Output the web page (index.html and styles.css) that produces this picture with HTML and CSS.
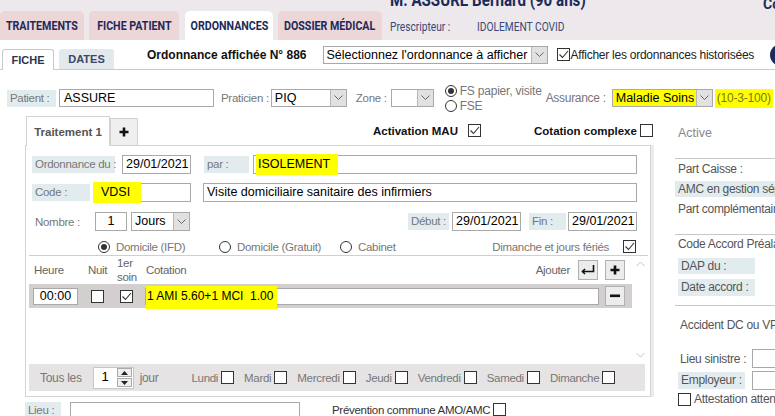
FILE: index.html
```html
<!DOCTYPE html>
<html lang="fr">
<head>
    <meta charset="UTF-8">
    <title>Ordonnances</title>
    <link rel="stylesheet" href="styles.css">
</head>
<body>
    <div class="top">
        <div class="tabs">
            <div class="tab t1"><span>TRAITEMENTS</span></div>
            <div class="tab t2"><span>FICHE PATIENT</span></div>
            <div class="tab t3 on"><span>ORDONNANCES</span></div>
            <div class="tab t4"><span>DOSSIER MÉDICAL</span></div>
        </div>
        <div class="who">
            <div class="who-name"><span>M. ASSURE Bernard (90 ans)</span></div>
            <div class="who-presc"><span class="who-k">Prescripteur :</span><span class="who-v">IDOLEMENT COVID</span></div>
        </div>
        <div class="who-co">Co</div>
    </div>

    <div class="subbar">
        <div class="subtab on">FICHE</div>
        <div class="subtab off">DATES</div>
        <div class="ord-title">Ordonnance affichée N° 886</div>
        <div class="sel sel-ord"><span class="sel-txt">Sélectionnez l'ordonnance à afficher</span><span class="sel-btn"><svg width="9" height="6" viewBox="0 0 9 6"><polyline points="0.5,0.5 4.5,4.5 8.5,0.5" fill="none" stroke="#666" stroke-width="1"/></svg></span></div>
        <span class="cb on hist-cb"><svg width="11" height="11" viewBox="0 0 11 11"><polyline points="1.5,5.5 4.5,8.5 10,2" fill="none" stroke="#333" stroke-width="1.1"/></svg></span>
        <span class="hist">Afficher les ordonnances historisées</span>
        <span class="info">i</span>
    </div>

    <div class="prow">
        <span class="lbl l-pat">Patient :</span>
        <div class="fld f-pat">ASSURE</div>
        <span class="txt t-prat">Praticien :</span>
        <div class="sel s-prat"><span class="sel-txt">PIQ</span><span class="sel-btn"><svg width="9" height="6" viewBox="0 0 9 6"><polyline points="0.5,0.5 4.5,4.5 8.5,0.5" fill="none" stroke="#666" stroke-width="1"/></svg></span></div>
        <span class="txt t-zone">Zone :</span>
        <div class="sel s-zone"><span class="sel-txt"></span><span class="sel-btn"><svg width="9" height="6" viewBox="0 0 9 6"><polyline points="0.5,0.5 4.5,4.5 8.5,0.5" fill="none" stroke="#666" stroke-width="1"/></svg></span></div>
        <div class="rads">
            <div class="rad-line"><span class="rad on"></span><span>FS papier, visite</span></div>
            <div class="rad-line"><span class="rad"></span><span>FSE</span></div>
        </div>
        <span class="txt t-ass">Assurance :</span>
        <div class="sel s-ass"><span class="sel-txt"><span class="hl">Maladie Soins</span></span><span class="sel-btn"><svg width="9" height="6" viewBox="0 0 9 6"><polyline points="0.5,0.5 4.5,4.5 8.5,0.5" fill="none" stroke="#666" stroke-width="1"/></svg></span></div>
        <span class="taux">(10-3-100)</span>
    </div>

    <div class="main">
        <div class="left">
            <div class="treat-head">
                <div class="ttab">Traitement 1</div>
                <div class="ptab"><svg width="10" height="10" viewBox="0 0 10 10"><path d="M5 0.5V9.5M0.5 5H9.5" stroke="#111" stroke-width="2.6"/></svg></div>
                <span class="mau">Activation MAU</span>
                <span class="cb on mau-cb"><svg width="11" height="11" viewBox="0 0 11 11"><polyline points="1.5,5.5 4.5,8.5 10,2" fill="none" stroke="#333" stroke-width="1.1"/></svg></span>
                <span class="mau cplx">Cotation complexe</span>
                <span class="cb cplx-cb"></span>
            </div>

            <div class="panel">
                <div class="frow">
                    <span class="lbl l-ord">Ordonnance du :</span>
                    <div class="fld f-date f-ord">29/01/2021</div>
                    <span class="lbl l-par">par :</span>
                    <div class="fld f-par"><span class="hl hl-iso">ISOLEMENT</span></div>
                </div>
                <div class="frow fr-code">
                    <span class="lbl l-code">Code :</span>
                    <div class="fld f-code"><span class="hl hl-code">VDSI</span></div>
                    <div class="fld f-lib">Visite domiciliaire sanitaire des infirmiers</div>
                </div>
                <div class="frow fr-nb">
                    <span class="txt t-nb">Nombre :</span>
                    <div class="fld f-nb">1</div>
                    <div class="sel s-jours"><span class="sel-txt">Jours</span><span class="sel-btn"><svg width="9" height="6" viewBox="0 0 9 6"><polyline points="0.5,0.5 4.5,4.5 8.5,0.5" fill="none" stroke="#666" stroke-width="1"/></svg></span></div>
                    <span class="lbl l-deb">Début :</span>
                    <div class="fld f-date f-deb">29/01/2021</div>
                    <span class="lbl l-fin">Fin :</span>
                    <div class="fld f-date f-fin">29/01/2021</div>
                </div>
                <div class="frow fr-lieu">
                    <div class="ritem"><span class="rad on"></span><span>Domicile (IFD)</span></div>
                    <div class="ritem"><span class="rad"></span><span>Domicile (Gratuit)</span></div>
                    <div class="ritem"><span class="rad"></span><span>Cabinet</span></div>
                    <span class="t-dim">Dimanche et jours fériés</span>
                    <span class="cb on dim-cb"><svg width="11" height="11" viewBox="0 0 11 11"><polyline points="1.5,5.5 4.5,8.5 10,2" fill="none" stroke="#333" stroke-width="1.1"/></svg></span>
                </div>

                <div class="grid">
                    <div class="grid-main">
                        <div class="ghead">
                            <span class="c-heure">Heure</span>
                            <span class="c-nuit">Nuit</span>
                            <span class="c-soin">1er<br>soin</span>
                            <span class="c-cot">Cotation</span>
                            <span class="ajout">Ajouter</span>
                            <span class="gbtn b-ret"><svg width="16" height="12" viewBox="0 0 16 12"><path d="M13.5 1V7.5H2.5" fill="none" stroke="#111" stroke-width="1.6"/><path d="M5 5L2.5 7.5L5 10" fill="none" stroke="#111" stroke-width="1.6"/></svg></span>
                            <span class="gbtn b-add"><svg width="10" height="10" viewBox="0 0 10 10"><path d="M5 0.5V9.5M0.5 5H9.5" stroke="#111" stroke-width="2.6"/></svg></span>
                        </div>
                        <div class="gdata">
                            <span class="c-heure"><span class="fld f-h">00:00</span></span>
                            <span class="c-nuit"><span class="cb"></span></span>
                            <span class="c-soin"><span class="cb on"><svg width="11" height="11" viewBox="0 0 11 11"><polyline points="1.5,5.5 4.5,8.5 10,2" fill="none" stroke="#333" stroke-width="1.1"/></svg></span></span>
                            <div class="fld f-cot"><span class="hl hl-cot">1 AMI 5.60+1 MCI&nbsp; 1.00</span></div>
                            <span class="gbtn b-del"><svg width="10" height="4" viewBox="0 0 10 4"><rect x="0" y="0.5" width="10" height="2.6" fill="#111"/></svg></span>
                        </div>
                    </div>
                    <div class="grid-scroll">
                        <svg width="9" height="6" viewBox="0 0 9 6"><polyline points="0.5,5 4.5,1 8.5,5" fill="none" stroke="#c4c4c4" stroke-width="1"/></svg>
                        <svg width="9" height="6" viewBox="0 0 9 6"><polyline points="0.5,1 4.5,5 8.5,1" fill="none" stroke="#c4c4c4" stroke-width="1"/></svg>
                    </div>
                </div>

                <div class="repeat">
                    <span class="txt t-tous">Tous les</span>
                    <div class="spin">
                        <span class="spin-val">1</span>
                        <span class="spin-btns">
                            <span class="spin-b"><svg width="7" height="4" viewBox="0 0 7 4"><polygon points="0,4 3.5,0 7,4" fill="#222"/></svg></span>
                            <span class="spin-b"><svg width="7" height="4" viewBox="0 0 7 4"><polygon points="0,0 3.5,4 7,0" fill="#222"/></svg></span>
                        </span>
                    </div>
                    <span class="txt t-jour">jour</span>
                    <span class="txt day d-first">Lundi</span><span class="cb"></span>
                    <span class="txt day">Mardi</span><span class="cb"></span>
                    <span class="txt day">Mercredi</span><span class="cb"></span>
                    <span class="txt day">Jeudi</span><span class="cb"></span>
                    <span class="txt day">Vendredi</span><span class="cb"></span>
                    <span class="txt day">Samedi</span><span class="cb"></span>
                    <span class="txt day">Dimanche</span><span class="cb"></span>
                </div>
            </div>

            <div class="lrow">
                <span class="lbl l-lieu">Lieu :</span>
                <div class="fld f-lieu"></div>
                <span class="prev">Prévention commune AMO/AMC</span>
                <span class="cb prev-cb"></span>
            </div>
        </div>

        <div class="right">
            <div class="r-active">Active</div>
            <div class="r-hr h1"></div>
            <div class="r-txt r-caisse">Part Caisse :</div>
            <div class="lbl r-amc">AMC en gestion séparée</div>
            <div class="r-txt r-comp">Part complémentaire :</div>
            <div class="r-hr h2"></div>
            <div class="r-txt r-accord">Code Accord Préalable</div>
            <div class="lbl r-dap">DAP du :</div>
            <div class="lbl r-acc">Date accord :</div>
            <div class="r-hr h3"></div>
            <div class="r-txt r-acdc">Accident DC ou VP</div>
            <div class="r-line r-sin"><span class="r-k">Lieu sinistre :</span><div class="fld r-in"></div></div>
            <div class="r-line r-emp"><span class="lbl r-k2">Employeur :</span><div class="fld r-in"></div></div>
            <div class="r-line r-att"><span class="cb"></span><span class="r-att-t">Attestation attente</span></div>
        </div>
    </div>
</body>
</html>
```

FILE: styles.css
```css
* { box-sizing: border-box; }
html, body { margin: 0; overflow: hidden; }
body { width: 775px; height: 416px; font-family: "Liberation Sans", Arial, sans-serif; font-size: 11.5px; color: #333; background: #fff; }

/* header */
.top { height: 40px; background: #ece8eb; display: flex; white-space: nowrap; overflow: hidden; }
.tabs { display: flex; align-items: flex-end; flex-shrink: 0; }
.tab { height: 29px; margin-right: 5px; background: #edd6d7; border-radius: 5px 5px 0 0; display: flex; align-items: center; justify-content: center; font-family: Roboto, sans-serif; font-weight: 700; font-size: 13px; color: #1c2a5a; }
.tab span { display: inline-block; transform: scaleX(.82); }
.tab.on { background: #fff; }
.t1 { width: 84px; }
.t2 { width: 90px; margin-right: 6px; }
.t3 { width: 88px; }
.t4 { width: 104px; margin-right: 0; }
.who { margin-left: 8px; width: 373px; flex-shrink: 0; }
.who-name { margin-top: -9px; height: 17px; line-height: 17px; font-family: Roboto, sans-serif; font-weight: 700; font-size: 18px; color: #1c2a5a; }
.who-name span { display: inline-block; transform: scaleX(.84); transform-origin: left center; }
.who-presc { margin-top: 12px; line-height: 14px; font-family: Roboto, sans-serif; font-size: 12px; color: #3a4877; }
.who-k, .who-v { display: inline-block; transform: scaleX(.85); transform-origin: left center; }
.who-k { width: 87px; }
.who-co { margin-top: -4px; font-family: Roboto, sans-serif; font-weight: 700; font-size: 14px; color: #1c2a5a; }

/* sub bar */
.subbar { height: 30px; border-bottom: 1px solid #c9c9c9; display: flex; align-items: center; white-space: nowrap; }
.subtab { align-self: flex-end; display: flex; align-items: center; justify-content: center; font-weight: 700; font-size: 11px; border-radius: 3px 3px 0 0; flex-shrink: 0; }
.subtab.on { margin-left: 2px; width: 52px; height: 21px; margin-bottom: -1px; background: #fff; border: 1px solid #c9c9c9; border-bottom: none; color: #2a3550; }
.subtab.off { margin-left: 5px; width: 55px; height: 20px; background: #e2e9ec; color: #3a4868; }
.ord-title { margin-left: 33px; font-weight: 700; font-size: 12px; color: #111; flex-shrink: 0; }
.sel-ord { margin-left: 16px; width: 225px; }
.hist-cb { margin-left: 9px; }
.hist { margin-left: 1px; font-size: 12px; color: #222; letter-spacing: -0.25px; flex-shrink: 0; }
.info { margin-left: 16px; width: 22px; height: 22px; flex-shrink: 0; border-radius: 50%; background: #1e2a5e; color: #fff; font-family: "Liberation Serif", serif; font-style: italic; font-weight: 700; font-size: 16px; display: flex; align-items: center; justify-content: center; }

/* shared widgets */
.txt { color: #777; letter-spacing: -0.3px; flex-shrink: 0; }
.lbl { height: 17px; line-height: 17px; background: #e2ecef; color: #777; padding-left: 3px; white-space: nowrap; letter-spacing: -0.3px; flex-shrink: 0; }
.fld { height: 19px; border: 1px solid #a9a9a9; background: #fff; font-size: 12.5px; color: #000; line-height: 17px; padding: 0 4px; white-space: nowrap; flex-shrink: 0; }
.sel { display: flex; height: 18px; border: 1px solid #a9a9a9; background: #fff; font-size: 12.5px; color: #000; flex-shrink: 0; }
.sel-txt { flex: 1; padding-left: 3px; line-height: 16px; overflow: hidden; white-space: nowrap; }
.sel-btn { width: 16px; flex-shrink: 0; background: #e1e1e1; border-left: 1px solid #b8b8b8; display: flex; align-items: center; justify-content: center; }
.cb { width: 13px; height: 13px; border: 1px solid #333; background: #fff; display: inline-flex; align-items: center; justify-content: center; flex-shrink: 0; }
.rad { width: 12px; height: 12px; border: 1px solid #333; border-radius: 50%; background: #fff; display: inline-flex; align-items: center; justify-content: center; flex-shrink: 0; }
.rad.on::after { content: ""; width: 6px; height: 6px; border-radius: 50%; background: #333; }
.hl { background: #ffff00; }

/* patient row */
.prow { margin-top: 14px; height: 28px; display: flex; align-items: center; white-space: nowrap; }
.l-pat { margin-left: 7px; width: 49px; }
.f-pat { margin-left: 3px; width: 155px; height: 18px; line-height: 16px; }
.t-prat { margin-left: 7px; }
.s-prat { margin-left: 2px; width: 76px; }
.t-zone { margin-left: 9px; }
.s-zone { margin-left: 4px; width: 43px; }
.rads { margin-left: 11px; width: 101px; flex-shrink: 0; color: #777; font-size: 12px; letter-spacing: -0.2px; }
.rad-line { display: flex; align-items: center; height: 14px; }
.rad-line + .rad-line { margin-top: 1px; }
.rad-line .rad { margin-right: 3px; }
.t-ass { font-size: 12px; }
.s-ass { margin-left: 6px; width: 101px; }
.s-ass .sel-txt { padding-left: 0; }
.s-ass .hl { padding: 2px 3px 3px 3px; }
.taux { margin-left: 2px; padding: 2px 2px 3px; background: #ffff00; color: #7a7a10; font-size: 12px; letter-spacing: -0.2px; }

/* main area */
.main { display: flex; margin-top: 4px; }
.left { margin-left: 25px; width: 626px; flex-shrink: 0; }
.right { margin-left: 24px; width: 100px; flex-shrink: 0; white-space: nowrap; color: #555; font-size: 12px; letter-spacing: -0.3px; }

.treat-head { display: flex; align-items: center; height: 29px; white-space: nowrap; }
.ttab { align-self: flex-end; position: relative; margin-left: 1px; width: 84px; height: 30px; margin-bottom: -1px; background: #fff; border: 1px solid #d3d3d3; border-bottom: none; font-weight: 700; font-size: 11.5px; color: #555; display: flex; align-items: center; justify-content: center; flex-shrink: 0; }
.ptab { align-self: flex-end; width: 28px; height: 27px; background: #efefef; border: 1px solid #d3d3d3; border-bottom: none; display: flex; align-items: center; justify-content: center; flex-shrink: 0; }
.mau { margin-left: 235px; font-weight: 700; font-size: 11.5px; color: #111; flex-shrink: 0; }
.mau-cb { margin-left: 10px; }
.cplx { margin-left: 53px; }
.cplx-cb { margin-left: 3px; }

.panel { height: 252px; border: 1px solid #d3d3d3; box-shadow: 3px 0 0 #ececec; padding-top: 9px; }
.frow { display: flex; align-items: center; height: 19px; padding: 0 13px 0 6px; white-space: nowrap; }
.l-ord { width: 83px; }
.f-ord { margin-left: 7px; }
.f-date { width: 69px; padding: 0 3px; }
.l-par { margin-left: 13px; width: 45px; }
.f-par { margin-left: 4px; width: 384px; padding-left: 2px; }
.hl-iso { padding: 3px 8px 4px 2px; }
.fr-code { margin-top: 9px; }
.l-code { width: 58px; }
.f-code { margin-left: 6px; width: 95px; }
.hl-code { margin-left: -8px; padding: 3px 11px 4px 8px; }
.f-lib { margin-left: 12px; width: 434px; padding-left: 3px; }
.fr-nb { margin-top: 10px; }
.t-nb { width: 63px; padding-left: 3px; }
.f-nb { width: 32px; text-align: center; }
.s-jours { margin-left: 4px; width: 59px; height: 19px; }
.l-deb { margin-left: auto; width: 41px; }
.f-deb { margin-left: 3px; }
.l-fin { margin-left: 8px; width: 37px; }
.f-fin { margin-left: 2px; }
.fr-lieu { margin-top: 9px; height: 13px; padding-right: 14px; color: #777; letter-spacing: -0.3px; }
.ritem { display: flex; align-items: center; width: 121px; flex-shrink: 0; }
.ritem:first-child { margin-left: 66px; }
.ritem .rad { margin-right: 6px; }
.ritem:last-of-type { width: auto; }
.t-dim { margin-left: auto; }
.dim-cb { margin-left: 14px; }

/* treatment grid */
.grid { display: flex; height: 108px; margin: 2px 2px 0 3px; border-top: 1px solid #cfcfcf; }
.grid-main { flex: 1; }
.grid-scroll { width: 16px; display: flex; flex-direction: column; justify-content: space-between; align-items: center; padding: 5px 0 5px; }
.ghead, .gdata { display: flex; align-items: center; white-space: nowrap; }
.ghead { height: 28px; color: #666; letter-spacing: -0.3px; }
.gdata { height: 24px; background: #d3cfcf; }
.c-heure { width: 56px; padding-left: 5px; display: flex; flex-shrink: 0; }
.c-nuit { width: 29px; padding-left: 3px; display: flex; flex-shrink: 0; }
.c-soin { width: 30px; line-height: 14px; padding-left: 3px; display: block; flex-shrink: 0; }
.gdata .c-heure { padding-left: 4px; }
.gdata .c-nuit { padding-left: 6px; }
.gdata .c-soin { padding-left: 6px; display: flex; }
.c-cot { padding-left: 2px; }
.f-h { width: 45px; height: 17px; line-height: 15px; text-align: center; padding: 0; }
.f-cot { margin-left: 1px; width: 454px; height: 17px; line-height: 15px; padding-left: 0; font-size: 12px; }
.hl-cot { padding: 3px 4px 6px 1px; }
.ajout { margin-left: auto; }
.gbtn { width: 20px; height: 20px; border: 1px solid #b0b0b0; background: #ececec; display: inline-flex; align-items: center; justify-content: center; flex-shrink: 0; }
.b-ret { margin-left: 8px; }
.b-add { margin-left: 7px; margin-right: 7px; }
.b-del { margin-left: 6px; }

.repeat { display: flex; align-items: center; height: 27px; margin: 1px 5px 0 3px; background: #e5e3e4; white-space: nowrap; }
.t-tous { margin-left: 11px; font-size: 12px; }
.spin { margin-left: 11px; width: 41px; height: 22px; display: flex; background: #fff; border: 1px solid #c6c6c6; flex-shrink: 0; }
.spin-val { flex: 1; text-align: center; font-size: 13px; line-height: 18px; color: #000; }
.spin-btns { width: 16px; display: flex; flex-direction: column; justify-content: center; gap: 1px; padding-right: 1px; }
.spin-b { height: 9px; border: 1px solid #aaa; background: #eee; display: flex; align-items: center; justify-content: center; }
.t-jour { margin-left: 6px; font-size: 12px; }
.day { margin-left: 10px; margin-right: 3px; }
.d-first { margin-left: 33px; }

.lrow { display: flex; align-items: flex-start; margin-top: 5px; white-space: nowrap; }
.l-lieu { width: 36px; height: 16px; line-height: 16px; }
.f-lieu { margin-left: 9px; width: 230px; }
.prev { margin-left: 32px; margin-top: 2px; color: #333; letter-spacing: -0.3px; }
.prev-cb { margin-left: 3px; margin-top: 1px; }

/* right column */
.r-active { margin-top: 10px; padding-left: 3px; line-height: 14px; color: #888; font-size: 12.5px; letter-spacing: 0; }
.r-hr { border-top: 1px solid #c8c8c8; }
.h1 { margin-top: 18px; }
.r-txt { padding-left: 3px; line-height: 14px; }
.r-caisse { margin-top: 3px; }
.r-amc { margin-top: 5px; height: 16px; line-height: 16px; color: #555; }
.r-comp { margin-top: 5px; }
.h2 { margin-top: 18px; }
.r-accord { margin-top: 2px; }
.r-dap { margin-top: 7px; margin-left: 3px; width: 77px; height: 16px; line-height: 16px; color: #555; }
.r-acc { margin-top: 5px; margin-left: 3px; width: 77px; color: #555; }
.h3 { margin-top: 9px; }
.r-acdc { margin-top: 12px; padding-left: 5px; }
.r-line { display: flex; align-items: center; }
.r-sin { margin-top: 17px; }
.r-k { width: 77px; padding-left: 5px; flex-shrink: 0; }
.r-in { width: 40px; }
.r-emp { margin-top: 3px; }
.r-k2 { margin-left: 3px; width: 67px; color: #555; }
.r-emp .r-in { margin-left: 7px; }
.r-att { margin-top: 2px; padding-left: 3px; }
.r-att-t { margin-left: 3px; }
```
